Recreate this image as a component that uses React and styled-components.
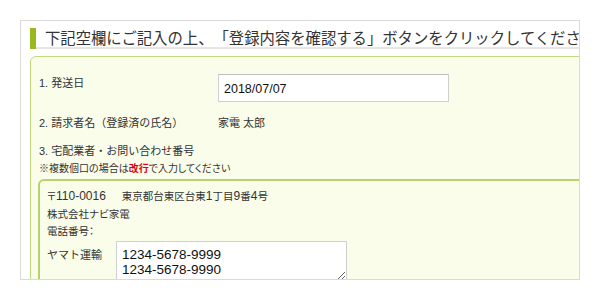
import styled, { createGlobalStyle } from 'styled-components';

const GlobalStyle = createGlobalStyle`
  html, body {
    margin: 0;
    padding: 0;
    background: #fff;
  }
  * {
    box-sizing: border-box;
  }
`;

export default function App() {
  return (
    <>
      <GlobalStyle />
      <Frame>
        <Heading>
          <Bar />
          <HeadingText>下記空欄にご記入の上、「登録内容を確認する」ボタンをクリックしてください。</HeadingText>
        </Heading>
        <FormBox>
          <Row $cols="179px 1fr">
            <Label $lh="12px" $pt="3px">1. 発送日</Label>
            <Input type="text" defaultValue="2018/07/07" />
          </Row>
          <Row $cols="179px 1fr" $mt="14px">
            <Label>2. 請求者名（登録済の氏名）</Label>
            <Label>家電 太郎</Label>
          </Row>
          <Label $mt="14px">3. 宅配業者・お問い合わせ番号</Label>
          <Note>
            ※複数個口の場合は<Red>改行</Red>で入力してください
          </Note>
          <Carrier>
            <Address>
              <Line>
                〒<Num>110-0016</Num>
                <Gap>東京都台東区台東<Num>1</Num>丁目<Num>9</Num>番<Num>4</Num>号</Gap>
              </Line>
              <Line>株式会社ナビ家電</Line>
              <Line>電話番号：</Line>
            </Address>
            <Row $cols="69px 1fr" $mt="2px">
              <Label $pt="7px">ヤマト運輸</Label>
              <TextArea defaultValue={'1234-5678-9999\n1234-5678-9990'} />
            </Row>
          </Carrier>
        </FormBox>
      </Frame>
    </>
  );
}

const Frame = styled.div`
  margin: 20px;
  width: 560px;
  height: 260px;
  border: 1px solid #dadada;
  background: #fff;
  overflow: hidden;
  padding: 7px 0 0 9px;
  font-family: "Liberation Sans", "Noto Sans CJK JP", sans-serif;
  color: #333;
`;

const Heading = styled.div`
  display: flex;
  width: 620px;
  height: 21px;
  border-bottom: 2px solid #e6e6e6;
`;

const Bar = styled.span`
  flex: none;
  width: 6px;
  height: 21px;
  background: #99b91c;
`;

const HeadingText = styled.h2`
  margin: 0 0 0 9px;
  font-family: "Noto Sans CJK JP", sans-serif;
  font-size: 15.35px;
  font-weight: 400;
  line-height: 19px;
  white-space: nowrap;
  text-spacing-trim: space-all;
  color: #333;
`;

const FormBox = styled.div`
  width: 620px;
  height: 300px;
  margin-top: 7px;
  padding: 17px 0 0 8px;
  background: #f9fdea;
  border: 1px solid #bfd97f;
  border-top-left-radius: 6px;
`;

const Row = styled.div`
  display: grid;
  grid-template-columns: ${(p) => p.$cols};
  align-items: start;
  margin-top: ${(p) => p.$mt || '0'};
`;

const Label = styled.div`
  font-size: 11px;
  line-height: ${(p) => p.$lh || '14px'};
  margin-top: ${(p) => p.$mt || '0'};
  padding-top: ${(p) => p.$pt || '0'};
  color: #333;
  white-space: nowrap;
`;

const Note = styled.div`
  margin-top: 4px;
  font-family: "Noto Sans CJK JP", sans-serif;
  font-size: 10px;
  line-height: 12px;
  font-feature-settings: "palt";
  color: #333;
`;

const Red = styled.span`
  color: #e60012;
  font-weight: 700;
`;

const Input = styled.input`
  display: block;
  width: 231px;
  height: 28px;
  padding: 2px 5px 0;
  border: 1px solid #cfcfcf;
  border-top-color: #bdbdbd;
  background: #fff;
  font-family: "Liberation Sans", sans-serif;
  font-size: 12.5px;
  color: #111;
  outline: none;
`;

const Carrier = styled.div`
  height: 200px;
  margin: 5px 0 0 -1px;
  padding: 6px 0 0 7px;
  border: 2px solid #b5d26f;
  border-top-left-radius: 6px;
  background: #f9fdea;
`;

const Address = styled.div`
  font-family: "Noto Sans CJK JP", sans-serif;
  font-size: 10.5px;
  line-height: 17px;
  font-feature-settings: "palt";
`;

const Line = styled.div`
  white-space: nowrap;
`;

const Num = styled.span`
  font-family: "Liberation Sans", sans-serif;
  font-size: 12px;
`;

const Gap = styled.span`
  margin-left: 16px;
`;

const TextArea = styled.textarea`
  display: block;
  width: 231px;
  height: 40px;
  margin: 0;
  padding: 5px 5px 0;
  border: 1px solid #cfcfcf;
  background: #fff;
  font-family: "Liberation Sans", sans-serif;
  font-size: 13.5px;
  line-height: 15px;
  color: #111;
  outline: none;
`;
